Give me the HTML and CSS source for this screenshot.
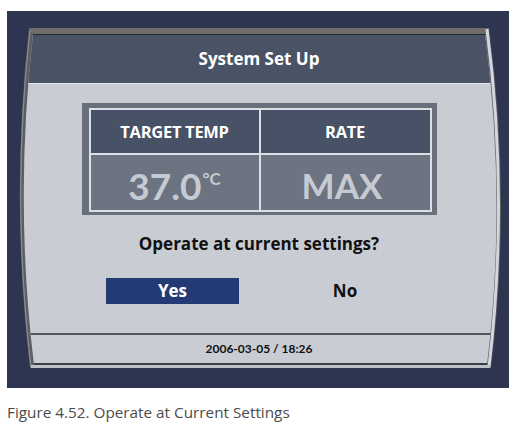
FILE: index.html
```html
<!DOCTYPE html>
<html>
<head>
<meta charset="utf-8">
<link rel="stylesheet" href="styles.css">
</head>
<body>
<div class="frame">
  <svg class="bezel" width="502" height="377" viewBox="0 0 502 377">
    <path d="M22 17 L482 17 Q505 187 484 357 L23 357 Q3 187 22 17 Z" fill="#5d5e64"/>
    <path d="M22 17 L482 17 L481 23 L25 23 Z" fill="#6f6c6a"/>
    <path d="M23 19 Q4 187 24 356" fill="none" stroke="#8c8d92" stroke-width="1.2"/>
    <path d="M480 18 Q502 187 482 356" fill="none" stroke="#d2d6dd" stroke-width="3"/>
    <path d="M24 354 L483 354 L483 357 L24 357 Z" fill="#bcc0c8"/>
  </svg>
  <div class="screen">
    <div class="title">System Set Up</div>
    <div class="body">
      <div class="table-frame">
        <div class="table">
          <div class="cell head">TARGET TEMP</div>
          <div class="cell head">RATE</div>
          <div class="cell val"><span class="num">37.0</span><span class="unit">°C</span></div>
          <div class="cell val"><span class="num">MAX</span></div>
        </div>
      </div>
      <div class="question">Operate at current settings?</div>
      <div class="choices">
        <div class="choice"><span class="btn selected">Yes</span></div>
        <div class="choice"><span class="btn">No</span></div>
      </div>
    </div>
    <div class="status">2006-03-05 / 18:26</div>
  </div>
</div>
<p class="caption">Figure 4.52. Operate at Current Settings</p>
</body>
</html>
```
FILE: styles.css
```css
html, body {
  margin: 0;
  padding: 0;
  background: #ffffff;
}
body {
  font-family: "Open Sans", "Liberation Sans", sans-serif;
}
.frame {
  position: relative;
  margin: 11px 0 0 7px;
  width: 502px;
  height: 377px;
  padding-top: 23px;
  box-sizing: border-box;
  background: #2e3550;
}
.bezel {
  position: absolute;
  left: 0;
  top: 0;
}
.screen {
  position: relative;
  margin-left: 7px;
  width: 490px;
  height: 331px;
  background: #c9ccd3;
  clip-path: path('M19 0 L471 0 Q493 167 473 331 L20 331 Q0 167 19 0 Z');
  display: flex;
  flex-direction: column;
}
.title {
  height: 48px;
  line-height: 48px;
  border-top: 1px solid #23272f;
  border-bottom: 1px solid #e4e7ec;
  background: #4a5366;
  color: #ffffff;
  font-weight: 700;
  font-size: 17px;
  text-align: center;
}
.body {
  height: 249px;
  display: flex;
  flex-direction: column;
  align-items: center;
}
.table-frame {
  margin-top: 19px;
  width: 355px;
  height: 112px;
  box-sizing: border-box;
  padding: 5px 5px 3px 7px;
  background: #696f7b;
}
.table {
  display: grid;
  grid-template-columns: 168px 169px;
  grid-template-rows: 43px 55px;
  gap: 2px;
  border: 2px solid #dadee5;
  background: #dadee5;
}
.cell {
  display: flex;
  align-items: center;
  justify-content: center;
}
.head {
  background: #485266;
  color: #ffffff;
  font-weight: 700;
  font-size: 16.5px;
  letter-spacing: -0.3px;
}
.val {
  background: #6c7381;
  color: #c6cad2;
  font-family: "Lato", "Liberation Sans", sans-serif;
  font-weight: 700;
  align-items: flex-start;
  padding-top: 12px;
  box-sizing: border-box;
}
.num {
  font-size: 37px;
  line-height: 37px;
}
.val .num:only-child {
  font-size: 35px;
  margin-right: 6px;
}
.unit {
  font-size: 17px;
  line-height: 17px;
  margin-top: 3px;
  margin-left: 1px;
}
.question {
  margin-top: 19px;
  height: 20px;
  line-height: 20px;
  font-size: 17px;
  font-weight: 700;
  color: #111111;
}
.choices {
  margin-top: 24px;
  display: grid;
  grid-template-columns: 170px 172px;
  margin-left: 2px;
}
.choice {
  display: flex;
  justify-content: center;
}
.btn {
  display: block;
  width: 133px;
  height: 26px;
  line-height: 26px;
  text-align: center;
  font-size: 17px;
  font-weight: 700;
  color: #111111;
}
.choice:first-child .btn {
  margin-right: 3px;
}
.btn.selected {
  background: #233a75;
  color: #ffffff;
}
.status {
  height: 28px;
  line-height: 28px;
  border-top: 2px solid #50555e;
  border-bottom: 2px solid #3a3e47;
  text-align: center;
  font-family: "Lato", "Liberation Sans", sans-serif;
  font-size: 12px;
  font-weight: 700;
  color: #111111;
}
.caption {
  margin: 14px 0 0 7px;
  font-size: 15.3px;
  line-height: 20px;
  color: #4b4b4b;
}
```
